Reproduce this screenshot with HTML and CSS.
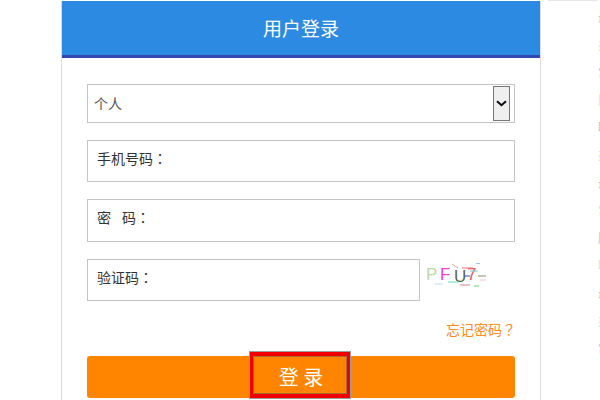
FILE: index.html
```html
<!DOCTYPE html>
<html lang="zh-CN">
  <head>
    <meta charset="UTF-8">
    <title>用户登录</title>
    <link rel="stylesheet" href="styles.css">
  </head>
  <body>
    <div class="page">
      <main class="card">
        <header class="card-head">
          <h1>用户登录</h1>
        </header>

        <form class="login-form">
          <div class="select-box">
            <span class="select-value">个人</span>
            <span class="select-btn">
              <svg width="11" height="7" viewBox="0 0 11 7">
                <path d="M1 1.2 L5.5 5.2 L10 1.2" fill="none" stroke="#0a0a14" stroke-width="2"/>
              </svg>
            </span>
          </div>

          <label class="field">
            <span class="field-label" lang="zh-TW">手机号码：</span>
            <input type="text">
          </label>

          <label class="field field-tall">
            <span class="field-label" lang="zh-TW">密<span class="label-gap"></span>码：</span>
            <input type="password">
          </label>

          <div class="captcha-row">
            <label class="field field-code">
              <span class="field-label" lang="zh-TW">验证码：</span>
              <input type="text">
            </label>
            <svg class="captcha" width="64" height="26" viewBox="0 0 64 26">
              <g font-family="Liberation Sans, sans-serif" font-size="17">
                <text x="0" y="17" fill="#bcdca0">P</text>
                <text x="14" y="17" fill="#f23fd2">F</text>
                <text x="28" y="19" fill="#5c6640">U</text>
                <text x="41" y="17" fill="#e8565c">7</text>
              </g>
              <g fill="none" stroke-width="1">
                <path d="M9 21 H17" stroke="#c4d8f4"/>
                <path d="M22 19 H33" stroke="#5fdcc4"/>
                <path d="M26 1 L32 5" stroke="#e8a0a0"/>
                <path d="M36 5 H47" stroke="#e87070"/>
                <path d="M38 13 H44" stroke="#3050c0"/>
                <path d="M50 0 H54" stroke="#5080e0"/>
                <path d="M52 13 H60" stroke="#8a8a70"/>
                <path d="M34 22 H44" stroke="#d08090"/>
                <path d="M48 23 H53" stroke="#60d860"/>
                <path d="M44 8 H52" stroke="#70c8d8"/>
                <path d="M54 17 H60" stroke="#f0c0d0"/>
              </g>
            </svg>
          </div>

          <div class="forgot" lang="zh-TW">
            <a href="#">忘记密码？</a>
          </div>

          <button type="button" class="login-btn">
            <span class="focus-mark"></span>
            登 录
          </button>
        </form>
      </main>

      <!-- next column, mostly off the right edge of the window -->
      <aside class="side">
        <div class="side-top"></div>
        <ul class="side-list">
          <li>最新公告</li>
          <li class="pale">办事指南</li>
          <li class="blue">常见问题</li>
          <li class="pale">服务说明</li>
          <li>联系方式</li>
          <li class="pale">办事指南</li>
          <li>最新公告</li>
          <li class="pale">常见问题</li>
          <li>服务说明</li>
          <li class="pale">联系方式</li>
          <li>最新公告</li>
          <li class="pale">办事指南</li>
          <li class="blue">常见问题</li>
        </ul>
      </aside>
    </div>
  </body>
</html>
```

FILE: styles.css
```css
* {
  margin: 0;
  padding: 0;
  box-sizing: border-box;
}

html, body {
  height: 100%;
  overflow: hidden;
}

body {
  font-family: "Noto Sans CJK SC", "Liberation Sans", sans-serif;
  background-color: #fff;
  color: #333;
  font-size: 14px;
}

.page {
  display: flex;
  height: 400px;
  padding: 1px 0 0 61px;
  overflow: hidden;
}

.card {
  flex: none;
  width: 480px;
  height: 420px;
  border-left: 1px solid #ddd;
  border-right: 1px solid #ddd;
}

.card-head {
  height: 57px;
  background-color: #2c8ae2;
  border-bottom: 3px solid #3348ae;
  color: #fff;
  text-align: center;
}

.card-head h1 {
  font-size: 19px;
  font-weight: 400;
  line-height: 54px;
}

.login-form {
  display: flex;
  flex-direction: column;
  padding: 26px 25px 0;
}

.select-box {
  display: flex;
  align-items: stretch;
  height: 39px;
  padding: 1px 4px 1px 6px;
  border: 1px solid #c4c4c4;
}

.select-value {
  flex: 1;
  color: #555;
  line-height: 35px;
}

.select-btn {
  display: flex;
  align-items: center;
  justify-content: center;
  width: 17px;
  background-color: #efefef;
  border: 1px solid #767676;
}

.field {
  display: flex;
  align-items: flex-start;
  height: 42px;
  margin-top: 17px;
  padding: 7px 9px 0;
  border: 1px solid #c4c4c4;
}

.field-tall {
  height: 43px;
}

.field-code {
  flex: none;
  width: 333px;
}

.field-label {
  flex: none;
  font-family: "Noto Sans CJK TC", "Liberation Sans", sans-serif;
  line-height: 20px;
}

.label-gap {
  display: inline-block;
  width: 11px;
}

.field input {
  flex: 1;
  min-width: 0;
  height: 20px;
  border: none;
  outline: none;
  background: transparent;
}

.captcha-row {
  display: flex;
  align-items: flex-end;
}

.captcha {
  flex: none;
  margin: 0 0 12px 6px;
}

.forgot {
  margin-top: 19px;
  margin-right: -1px;
  font-family: "Noto Sans CJK TC", "Liberation Sans", sans-serif;
  text-align: right;
  line-height: 18px;
}

.forgot a {
  color: #ff8a1e;
  text-decoration: none;
}

.login-btn {
  position: relative;
  height: 42px;
  margin-top: 18px;
  background-color: #ff8400;
  border: none;
  border-radius: 3px;
  color: #fff;
  font-family: inherit;
  font-size: 20px;
  line-height: 42px;
}

.focus-mark {
  position: absolute;
  left: 163px;
  top: -4px;
  width: 100px;
  height: 46px;
  border-style: solid;
  border-width: 4px 3px;
  border-color: #f00000;
  outline: 1px solid #9aa0a0;
  box-shadow: inset 0 0 0 1px #a86a30;
}

.side {
  flex: none;
  width: 60px;
  margin-left: 7px;
  margin-top: -1px;
}

.side-top {
  width: 50px;
  height: 1px;
  background-color: #e6e6e6;
}

.side-list {
  list-style: none;
  padding: 2px 0 0 50px;
  font-size: 12px;
  line-height: 27.6px;
  color: #bbb;
  white-space: nowrap;
}

.side-list .pale {
  color: #ddd;
}

.side-list .blue {
  color: #b4cbe8;
}
```
